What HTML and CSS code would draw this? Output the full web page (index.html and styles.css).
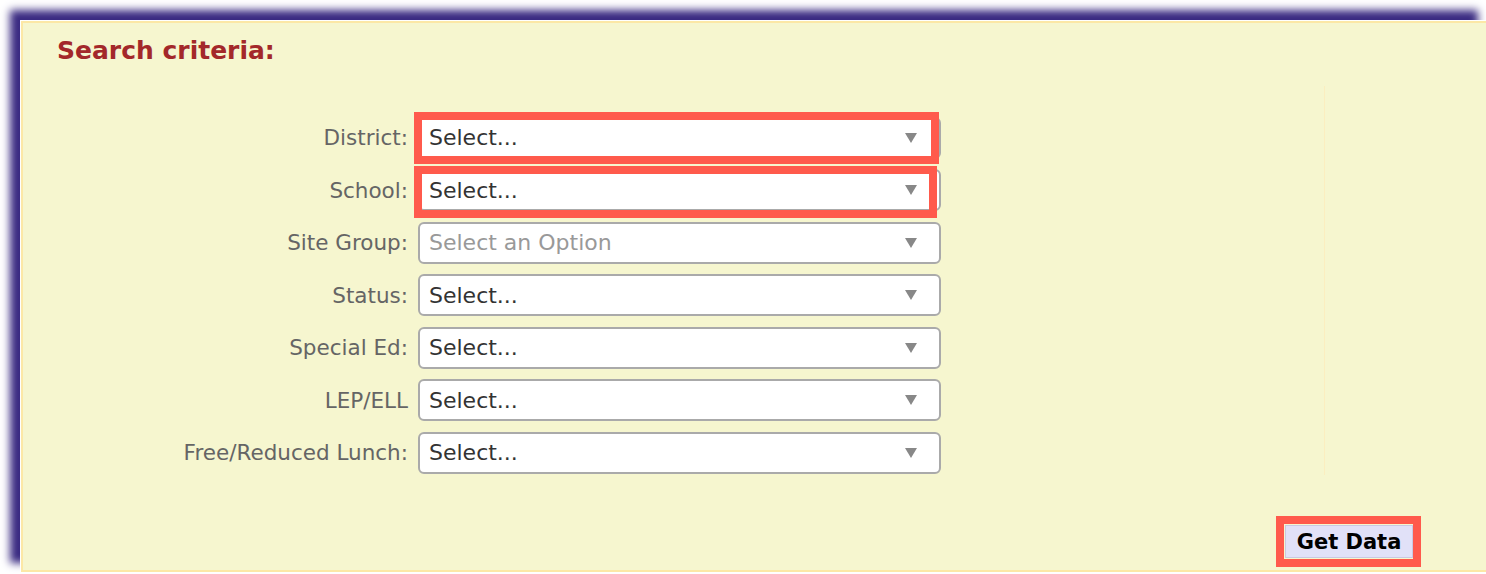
FILE: index.html
```html
<!DOCTYPE html>
<html lang="en">
<head>
<meta charset="utf-8">
<title>Search criteria</title>
<link rel="stylesheet" href="styles.css">
</head>
<body>
<div class="frame">
  <div class="panel">
    <h2 class="title">Search criteria:</h2>
    <div class="criteria">
      <div class="fields">
        <div class="form">
          <label class="label">District:</label>
          <div class="field mark-district"><div class="select"><span class="value">Select...</span><svg class="arrow" viewBox="0 0 12 10"><path d="M0 0H12L6 10Z"/></svg></div></div>
          <label class="label">School:</label>
          <div class="field mark-school"><div class="select"><span class="value">Select...</span><svg class="arrow" viewBox="0 0 12 10"><path d="M0 0H12L6 10Z"/></svg></div></div>
          <label class="label">Site Group:</label>
          <div class="field"><div class="select"><span class="value placeholder">Select an Option</span><svg class="arrow" viewBox="0 0 12 10"><path d="M0 0H12L6 10Z"/></svg></div></div>
          <label class="label">Status:</label>
          <div class="field"><div class="select"><span class="value">Select...</span><svg class="arrow" viewBox="0 0 12 10"><path d="M0 0H12L6 10Z"/></svg></div></div>
          <label class="label">Special Ed:</label>
          <div class="field"><div class="select"><span class="value">Select...</span><svg class="arrow" viewBox="0 0 12 10"><path d="M0 0H12L6 10Z"/></svg></div></div>
          <label class="label">LEP/ELL</label>
          <div class="field"><div class="select"><span class="value">Select...</span><svg class="arrow" viewBox="0 0 12 10"><path d="M0 0H12L6 10Z"/></svg></div></div>
          <label class="label">Free/Reduced Lunch:</label>
          <div class="field"><div class="select"><span class="value">Select...</span><svg class="arrow" viewBox="0 0 12 10"><path d="M0 0H12L6 10Z"/></svg></div></div>
        </div>
      </div>
      <div class="side"></div>
    </div>
    <div class="actions">
      <div class="btn-wrap"><button class="btn" type="button">Get Data</button></div>
    </div>
  </div>
</div>
</body>
</html>
```
FILE: styles.css
```css
html, body {
  margin: 0;
  padding: 0;
  background: #ffffff;
  overflow: hidden;
}
body {
  font-family: "DejaVu Sans", Verdana, sans-serif;
  width: 1486px;
  height: 574px;
}
.frame {
  margin: 20px 0 0 20px;
  width: 1467px;
  height: 551px;
  padding: 1px 0 1px 1px;
  background: #ffffff;
  box-shadow: -10px -10px 8px #3a2b82;
}
.panel {
  box-sizing: border-box;
  height: 100%;
  background: #f6f6cf;
  border: 2px solid #fce8a6;
  border-right: none;
  display: flex;
  flex-direction: column;
}
.title {
  margin: 13px 0 0 34px;
  font-size: 25px;
  line-height: 30px;
  font-weight: bold;
  color: #a3282a;
  height: 30px;
}
.criteria {
  margin-top: 20px;
  display: flex;
  height: 389px;
}
.fields {
  width: 1302px;
  box-sizing: border-box;
  border-right: 1px solid #fbeec0;
  padding-top: 30.5px;
}
.side {
  flex: 1;
}
.form {
  display: grid;
  grid-template-columns: 385px 523px;
  column-gap: 10px;
  row-gap: 10.5px;
  grid-auto-rows: 42px;
}
.label {
  font-size: 21.5px;
  color: #656565;
  display: flex;
  align-items: center;
  justify-content: flex-end;
  white-space: nowrap;
}
.field {
  position: relative;
}
.select {
  box-sizing: border-box;
  height: 42px;
  border: 2px solid #aaaaaa;
  border-radius: 6px;
  background: #ffffff;
  display: flex;
  align-items: center;
  padding: 0 22px 0 9px;
}
.value {
  flex: 1;
  font-size: 22px;
  color: #333333;
  white-space: nowrap;
}
.value.placeholder {
  color: #999999;
}
.arrow {
  width: 12px;
  height: 10px;
  fill: #888888;
}
.mark-district::after,
.mark-school::after,
.btn-wrap::after {
  content: "";
  position: absolute;
  border: 8px solid #ff5a4c;
  pointer-events: none;
}
.mark-district::after {
  top: -5px;
  left: -4px;
  right: 2px;
  bottom: -5px;
}
.mark-school::after {
  top: -3.5px;
  left: -4px;
  right: 4px;
  bottom: -6.5px;
}
.actions {
  display: flex;
  justify-content: flex-end;
  padding: 50px 75px 0 0;
}
.btn-wrap {
  position: relative;
}
.btn-wrap::after {
  top: -9px;
  left: -9px;
  right: -8px;
  bottom: -9px;
}
.btn {
  display: block;
  width: 128px;
  height: 33px;
  margin: 0;
  padding: 0;
  font-family: "DejaVu Sans", Verdana, sans-serif;
  font-size: 21px;
  font-weight: bold;
  color: #000000;
  background: #e1e1f8;
  border: 1px solid #c9c9e2;
}
```
